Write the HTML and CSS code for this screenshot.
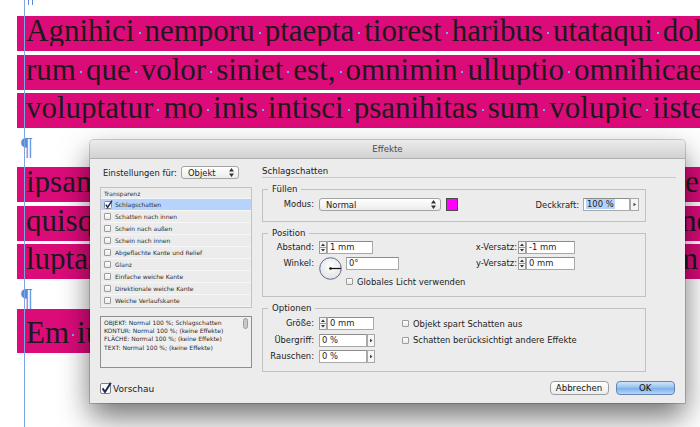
FILE: index.html
```html
<!DOCTYPE html>
<html>
<head>
<meta charset="utf-8">
<title>Effekte</title>
<link rel="stylesheet" href="styles.css">
</head>
<body>
<div class="page">
  <div class="guide"></div>

  <div class="story">
    <div class="stub"></div>
    <div class="para first">
      <div class="band"><span class="txt">Agnihici<i class="sp"></i>nemporu<i class="sp"></i>ptaepta<i class="sp"></i>tiorest<i class="sp"></i>haribus<i class="sp"></i>utataqui<i class="sp"></i>dolor</span></div>
      <div class="band"><span class="txt">rum<i class="sp"></i>que<i class="sp"></i>volor<i class="sp"></i>siniet<i class="sp"></i>est,<i class="sp"></i>omnimin<i class="sp"></i>ulluptio<i class="sp"></i>omnihicae<i class="sp"></i>nus</span></div>
      <div class="band"><span class="txt">voluptatur<i class="sp"></i>mo<i class="sp"></i>inis<i class="sp"></i>intisci<i class="sp"></i>psanihitas<i class="sp"></i>sum<i class="sp"></i>volupic<i class="sp"></i>iistem</span></div>
    </div>
    <div class="pil">¶</div>
    <div class="para">
      <div class="band"><span class="txt">ipsam<i class="sp"></i>quaest<i class="sp"></i>volorum<i class="sp"></i>facerum</span><span class="tail">e<i class="sp"></i>nat</span></div>
      <div class="band"><span class="txt">quisque<i class="sp"></i>dolupta<i class="sp"></i>tiatem</span><span class="tail t2">ne<i class="sp"></i>s</span></div>
      <div class="band"><span class="txt">luptas<i class="sp"></i>esequia<i class="sp"></i>dolor</span><span class="tail t3">m<i class="sp"></i>a</span></div>
    </div>
    <div class="pil">¶</div>
    <div class="para last">
      <div class="band tall"><span class="txt">Em<i class="sp"></i>iure<i class="sp"></i>nem<i class="sp"></i>sum</span></div>
    </div>
  </div>

  <div class="dialog">
    <div class="titlebar">Effekte</div>
    <div class="dlg-body">

      <div class="side">
        <div class="scope">
          <span class="scope-lbl">Einstellungen für:</span>
          <div class="select sel-obj">Objekt
            <svg width="5" height="9" viewBox="0 0 5 9"><path d="M0 3.5h5L2.5 0z M0 5.5h5L2.5 9z" fill="#333"/></svg>
          </div>
        </div>

        <div class="fxlist">
          <div class="fx-head">Transparenz</div>
          <div class="fx on">
            <svg class="chk" width="9" height="9" viewBox="0 0 9 9"><rect x=".5" y="1.5" width="7" height="7" rx="1" fill="#fff" stroke="#8a8a8a"/><path d="M1.8 4.6L3.6 7.4L8 .6" fill="none" stroke="#1f2d57" stroke-width="1.5"/></svg>
            Schlagschatten
          </div>
          <div class="fx"><span class="cb"></span>Schatten nach innen</div>
          <div class="fx"><span class="cb"></span>Schein nach außen</div>
          <div class="fx"><span class="cb"></span>Schein nach innen</div>
          <div class="fx"><span class="cb"></span>Abgeflachte Kante und Relief</div>
          <div class="fx"><span class="cb"></span>Glanz</div>
          <div class="fx"><span class="cb"></span>Einfache weiche Kante</div>
          <div class="fx"><span class="cb"></span>Direktionale weiche Kante</div>
          <div class="fx"><span class="cb"></span>Weiche Verlaufskante</div>
        </div>

        <div class="summary">
          <div class="summary-text">
            OBJEKT: Normal 100 %; Schlagschatten<br>
            KONTUR: Normal 100 %; (keine Effekte)<br>
            FLÄCHE: Normal 100 %; (keine Effekte)<br>
            TEXT: Normal 100 %; (keine Effekte)
          </div>
          <div class="thumb"></div>
        </div>

        <div class="preview">
          <svg width="12" height="12" viewBox="0 0 12 12"><rect x=".5" y="1.5" width="10" height="10" rx="1.5" fill="#fff" stroke="#7f7f7f"/><path d="M2.6 6.4L5 10L10.8 .8" fill="none" stroke="#1f2d57" stroke-width="2"/></svg>
          <span>Vorschau</span>
        </div>
      </div>

      <div class="main">
        <div class="heading">Schlagschatten</div>

        <fieldset class="grp">
          <legend>Füllen</legend>
          <div class="fill-row">
            <span class="lbl">Modus:</span>
            <div class="select sel-mode">Normal
              <svg width="5" height="9" viewBox="0 0 5 9"><path d="M0 3.5h5L2.5 0z M0 5.5h5L2.5 9z" fill="#333"/></svg>
            </div>
            <span class="swatch"></span>
            <span class="lbl-r">Deckkraft:</span>
            <span class="field f-opac"><span class="hl">100 %</span></span>
            <svg class="arr" width="9" height="13" viewBox="0 0 9 13"><rect x=".5" y=".5" width="8" height="12" fill="#f6f6f6" stroke="#a9a9a9"/><path d="M3.5 4.8v3.4l2.6-1.7z" fill="#444"/></svg>
          </div>
        </fieldset>

        <fieldset class="grp">
          <legend>Position</legend>
          <div class="pos-grid">
            <span class="lbl">Abstand:</span>
            <div class="ctl">
              <svg class="spin" width="8" height="13" viewBox="0 0 8 13"><rect x=".5" y=".5" width="7" height="12" fill="#f4f4f4" stroke="#9b9b9b"/><path d="M1 6.5h6" stroke="#9b9b9b"/><path d="M2 5h4L4 2.6z M2 8h4L4 10.4z" fill="#333"/></svg>
              <span class="field w46">1 mm</span>
            </div>
            <span class="lbl">x-Versatz:</span>
            <div class="ctl c-right">
              <svg class="spin" width="8" height="13" viewBox="0 0 8 13"><rect x=".5" y=".5" width="7" height="12" fill="#f4f4f4" stroke="#9b9b9b"/><path d="M1 6.5h6" stroke="#9b9b9b"/><path d="M2 5h4L4 2.6z M2 8h4L4 10.4z" fill="#333"/></svg>
              <span class="field w49">-1 mm</span>
            </div>

            <span class="lbl">Winkel:</span>
            <div class="ctl angle">
              <svg class="dial" width="23" height="23" viewBox="0 0 23 23">
                <defs><radialGradient id="dialfill" cx="50%" cy="40%" r="60%"><stop offset="0" stop-color="#ffffff"/><stop offset="1" stop-color="#e2e2e2"/></radialGradient></defs>
                <circle cx="11.5" cy="11.5" r="10.8" fill="url(#dialfill)" stroke="#5b6b90" stroke-width="1"/>
                <path d="M11.5 11.5H22" stroke="#111" stroke-width="1.2"/>
                <circle cx="11.5" cy="11.5" r="1.3" fill="#111"/>
              </svg>
              <div class="angle-col">
                <span class="field w53">0°</span>
                <div class="check"><span class="cb"></span>Globales Licht verwenden</div>
              </div>
            </div>
            <span class="lbl">y-Versatz:</span>
            <div class="ctl c-right">
              <svg class="spin" width="8" height="13" viewBox="0 0 8 13"><rect x=".5" y=".5" width="7" height="12" fill="#f4f4f4" stroke="#9b9b9b"/><path d="M1 6.5h6" stroke="#9b9b9b"/><path d="M2 5h4L4 2.6z M2 8h4L4 10.4z" fill="#333"/></svg>
              <span class="field w49">0 mm</span>
            </div>
          </div>
        </fieldset>

        <fieldset class="grp last">
          <legend>Optionen</legend>
          <div class="opt-grid">
            <span class="lbl">Größe:</span>
            <div class="ctl">
              <svg class="spin" width="8" height="13" viewBox="0 0 8 13"><rect x=".5" y=".5" width="7" height="12" fill="#f4f4f4" stroke="#9b9b9b"/><path d="M1 6.5h6" stroke="#9b9b9b"/><path d="M2 5h4L4 2.6z M2 8h4L4 10.4z" fill="#333"/></svg>
              <span class="field w47">0 mm</span>
            </div>
            <div class="check"><span class="cb"></span>Objekt spart Schatten aus</div>

            <span class="lbl">Übergriff:</span>
            <div class="ctl">
              <span class="field w48">0 %</span>
              <svg class="arr" width="8" height="13" viewBox="0 0 8 13"><rect x=".5" y=".5" width="7" height="12" fill="#f6f6f6" stroke="#a9a9a9"/><path d="M3 4.8v3.4l2.6-1.7z" fill="#444"/></svg>
            </div>
            <div class="check"><span class="cb"></span>Schatten berücksichtigt andere Effekte</div>

            <span class="lbl">Rauschen:</span>
            <div class="ctl">
              <span class="field w48">0 %</span>
              <svg class="arr" width="8" height="13" viewBox="0 0 8 13"><rect x=".5" y=".5" width="7" height="12" fill="#f6f6f6" stroke="#a9a9a9"/><path d="M3 4.8v3.4l2.6-1.7z" fill="#444"/></svg>
            </div>
            <span></span>
          </div>
        </fieldset>

        <div class="actions">
          <button class="btn">Abbrechen</button>
          <button class="btn ok">OK</button>
        </div>
      </div>

    </div>
  </div>
</div>
</body>
</html>
```

FILE: styles.css
```css
* {
  box-sizing: border-box;
}

html, body {
  margin: 0;
  padding: 0;
}

body {
  background: #fff;
}

.page {
  position: relative;
  width: 700px;
  height: 427px;
  overflow: hidden;
}

/* blue column guide running down the page */
.guide {
  position: absolute;
  left: 24px;
  top: 0;
  bottom: 0;
  width: 1px;
  background: #7ea5e6;
  z-index: 1;
}

/* ---- text frame ---- */

.story {
  font-family: "Liberation Serif", serif;
  font-size: 31px;
  color: #1d1a1c;
}

.stub {
  width: 5px;
  height: 5px;
  margin-left: 27.5px;
  border-left: 1.5px solid #5a8bd6;
  border-right: 1.5px solid #5a8bd6;
}

.para {
  display: flex;
  flex-direction: column;
  gap: 3.5px;
  margin-top: 9px;
}

.para.first {
  margin-top: 11px;
}

.para.last {
  margin-top: 0;
}

.band {
  display: flex;
  height: 35px;
  margin-left: 17px;
  padding: 0 0 5px 9px;
  line-height: 30px;
  white-space: nowrap;
  overflow: hidden;
  background: #dc0b7a;
}

.band .txt {
  flex: 1 1 auto;
  min-width: 0;
  overflow: hidden;
}

.band .tail {
  flex: none;
  width: 15px;
  overflow: hidden;
}

.band .t2 {
  text-indent: -4px;
}

.band .t3 {
  text-indent: -11px;
}

.band.tall {
  width: 300px;
  height: 44px;
  padding-top: 9px;
}

/* hidden space marker */
.sp {
  display: inline-block;
  width: 10px;
  height: 2px;
  vertical-align: 7px;
  background: radial-gradient(circle, #66b4e8 0 0.9px, transparent 1.4px);
}

/* last paragraph is set ragged, so its spaces stay narrow */
.band.tall .sp {
  width: 8px;
}

.pil {
  height: 21px;
  margin-top: 9px;
  margin-left: 21px;
  font-size: 25px;
  line-height: 20px;
  color: #5a8bd6;
}

/* ---- Effekte dialog ---- */

.dialog {
  position: absolute;
  left: 90px;
  top: 140px;
  width: 595px;
  height: 263px;
  z-index: 2;
  background: #ececec;
  border-radius: 4px 4px 0 0;
  box-shadow: 0 0 0 1px rgba(0, 0, 0, .18), 0 14px 30px rgba(0, 0, 0, .55);
  font-family: "DejaVu Sans", sans-serif;
  font-size: 8.4px;
  color: #1b1b1b;
}

.titlebar {
  height: 19px;
  line-height: 18px;
  text-align: center;
  font-size: 8.6px;
  color: #4a4a4a;
  background: linear-gradient(#ebebeb, #d2d2d2);
  border-bottom: 1px solid #b0b0b0;
  border-radius: 4px 4px 0 0;
}

.dlg-body {
  display: grid;
  grid-template-columns: 152px 414px;
  column-gap: 10px;
  padding: 7px 0 0 10px;
}

/* left column */

.scope {
  display: flex;
  align-items: center;
  height: 13px;
  margin-bottom: 8px;
  padding-left: 3px;
}

.scope-lbl {
  width: 78px;
}

.select {
  display: flex;
  align-items: center;
  justify-content: space-between;
  height: 13px;
  padding: 0 4px 0 6px;
  border: 1px solid #a4a4a4;
  border-radius: 3px;
  background: linear-gradient(#fff, #ececec);
}

.sel-obj {
  width: 58px;
}

.fxlist {
  border: 1px solid #c2c2c2;
  margin-bottom: 8px;
  font-size: 6px;
  color: #2e2e2e;
}

.fx-head,
.fx {
  display: flex;
  align-items: center;
  height: 12px;
  padding-left: 3px;
  border-bottom: 1px solid #f7f7f7;
}

.fx-head {
  height: 11px;
}

.fx.on {
  background: #b6d4fb;
}

.fx .cb {
  margin-right: 4px;
}

.fx .chk {
  margin: -1px 2px 0 0;
}

.cb {
  display: inline-block;
  width: 7px;
  height: 7px;
  flex: none;
  border: 1px solid #9c9c9c;
  border-radius: 1px;
  background: linear-gradient(#fff, #e8e8e8);
}

.summary {
  display: flex;
  justify-content: space-between;
  height: 52px;
  margin-bottom: 15px;
  padding: 2px 3px 0 3px;
  border: 1px solid #8e8e8e;
  background: #efefef;
  font-size: 6px;
  line-height: 8.2px;
  color: #2a2a2a;
}

.thumb {
  width: 5px;
  height: 11px;
  margin-top: -1px;
  border: 1px solid #9d9d9d;
  border-radius: 3px;
  background: #c9c9c9;
}

.preview {
  display: flex;
  align-items: center;
  height: 11px;
  font-size: 9px;
}

.preview svg {
  margin: -2px 1px 0 0;
}

/* right column */

.heading {
  height: 12px;
  line-height: 11px;
  margin-bottom: 6px;
  font-size: 8.6px;
  border-bottom: 1px solid #c9c9c9;
}

.grp {
  width: 384px;
  min-inline-size: 0;
  margin: 0 0 6px;
  padding: 0;
  border: 1px solid #c1c1c1;
}

.grp.last {
  margin-bottom: 9px;
}

.grp legend {
  margin-left: 5px;
  padding: 0 4px;
  line-height: 10px;
  font-size: 8.6px;
}

.lbl {
  width: 51px;
  text-align: right;
  line-height: 13px;
}

.lbl-r {
  margin: 0 4px 0 auto;
}

.field {
  display: inline-block;
  height: 13px;
  padding-left: 2px;
  line-height: 11px;
  border: 1px solid #a9a9a9;
  border-top-color: #8c8c8c;
  background: #fff;
  white-space: nowrap;
}

.w46 { width: 46px; }
.w47 { width: 47px; }
.w48 { width: 48px; }
.w49 { width: 49px; }
.w53 { width: 53px; }

.fill-row {
  display: flex;
  align-items: center;
  height: 13px;
  margin: 4px 6px 10px 0;
}

.sel-mode {
  width: 122px;
  margin-left: 5px;
}

.swatch {
  width: 12px;
  height: 13px;
  margin-left: 5px;
  border: 1px solid #4b4b4b;
  background: #ff00ff;
}

.f-opac {
  width: 47px;
}

.hl {
  background: #b4d3fc;
  padding: 0 1px;
}

.ctl {
  display: flex;
  align-items: flex-start;
  margin-left: 5px;
}

.ctl.c-right {
  margin-left: 2px;
}

.pos-grid {
  display: grid;
  grid-template-columns: 51px 152px 50px auto;
  row-gap: 3px;
  padding: 3px 0 11px;
  align-items: start;
}

.dial {
  flex: none;
  margin-right: 4px;
}

.angle-col {
  display: flex;
  flex-direction: column;
}

.check {
  display: flex;
  align-items: center;
  height: 13px;
}

.check .cb {
  margin-right: 4px;
}

.angle-col .check {
  height: 7px;
  margin-top: 8px;
}

.opt-grid {
  display: grid;
  grid-template-columns: 51px 88px auto;
  row-gap: 3.5px;
  padding: 4px 0 8px;
}

.actions {
  display: flex;
  justify-content: flex-end;
  gap: 7.5px;
  padding-right: 1.5px;
}

.btn {
  width: 59px;
  height: 14px;
  padding: 0;
  font-family: inherit;
  font-size: 8.6px;
  line-height: 12px;
  color: #111;
  border: 1px solid #9d9d9d;
  border-radius: 4px;
  background: linear-gradient(#fff, #ececec);
}

.btn.ok {
  width: 58.5px;
  border-color: #6584b7;
  background: linear-gradient(#d3e6f9, #93c0ef 48%, #7cb0ea 52%, #b5d6f7);
}
```
